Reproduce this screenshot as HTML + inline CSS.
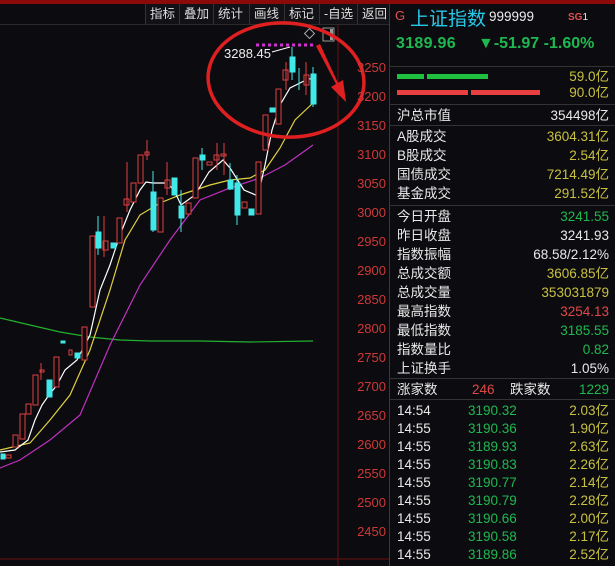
<!DOCTYPE html>
<html><head><meta charset="utf-8"><style>
*{margin:0;padding:0;box-sizing:border-box}
body{width:615px;height:566px;background:#0c0c10;overflow:hidden;position:relative;font-family:"Liberation Sans","Noto Sans CJK SC",sans-serif;color:#ddd}
.top{position:absolute;left:0;top:0;width:615px;height:4px;background:#8a0a0a}
.tb{position:absolute;left:0;top:4px;width:389px;height:20px;font-size:12.5px;color:#ddd;line-height:20px;white-space:nowrap}
.tb span{position:absolute;top:0;height:20px;border-left:1px solid #333;padding-left:4px;white-space:nowrap;background:#111116}
.ax{position:absolute;left:340px;width:46px;text-align:right;font-size:13px;color:#d03838}
.rp{position:absolute;left:389px;top:4px;width:226px;height:562px;border-left:1px solid #3a3a3a;background:#0c0c10}
.r{position:absolute;left:7px;right:6px;font-size:13.5px;height:19px;line-height:19px;white-space:nowrap}
.r b{font-weight:normal;position:absolute;right:0}
.sep{position:absolute;left:0;right:0;height:1px;background:#333}
.g{color:#1fb850}.y{color:#c8c040}.rd{color:#e04848}.w{color:#e8e8e8}
</style></head><body>
<div class="top"></div>
<div class="tb">
<span style="left:145px;width:34px">指标</span><span style="left:179px;width:34px">叠加</span><span style="left:213px;width:36px">统计</span><span style="left:249px;width:35px">画线</span><span style="left:284px;width:35px">标记</span><span style="left:319px;width:38px">-自选</span><span style="left:357px;width:32px">返回</span>
</div>
<div style="position:absolute;left:0;top:24px;width:389px;height:1px;background:#2a2a2a"></div>
<svg width="389" height="566" style="position:absolute;left:0;top:0">
<line x1="338" y1="25" x2="338" y2="566" stroke="#6a1010"/>
<line x1="0" y1="559" x2="389" y2="559" stroke="#6a1010"/>
<g fill="none" stroke-width="1.2">
<polyline stroke="#22b030" points="0,318 30,325 60,332 90,337 120,340 150,341 200,341 250,342 313,341"/>
<polyline stroke="#c030c0" points="0,468 20,460 50,440 80,415 110,345 140,285 170,240 200,200 230,188 260,178 285,165 313,145"/>
<polyline stroke="#e0d040" points="0,450 30,443 50,420 70,395 90,350 110,290 125,240 140,215 160,203 180,195 210,185 230,180 250,178 265,170 280,148 295,120 313,103"/>
<polyline stroke="#fff" points="0,452 15,450 28,440 35,420 42,405 49,395 57,385 65,370 77,360 90,335 100,290 110,265 120,235 130,210 140,190 146,182 153,183 167,183 174,190 181,205 195,195 209,172 223,160 230,168 244,190 258,196 265,165 272,130 280,105 290,88 306,80 313,78"/>
</g>
<g stroke="#e04040" fill="#0c0c10" stroke-width="1">
<rect x="6" y="455" width="5" height="3"/><rect x="13" y="435" width="5" height="12"/><rect x="20" y="414" width="5" height="25"/><rect x="26" y="404" width="5" height="10"/><rect x="33" y="375" width="5" height="30"/><rect x="40" y="370" width="4" height="2"/><rect x="54" y="357" width="5" height="30"/><rect x="69" y="350" width="3" height="5"/><rect x="82" y="327" width="5" height="33"/>
<rect x="90" y="236" width="5" height="71"/><rect x="103" y="241" width="5" height="9"/><rect x="117" y="218" width="5" height="25"/><rect x="124" y="199" width="5" height="6"/><rect x="131" y="183" width="5" height="19"/><rect x="138" y="155" width="5" height="28"/><rect x="145" y="152" width="4" height="3"/><rect x="158" y="198" width="5" height="34"/><rect x="165" y="180" width="5" height="8"/><rect x="186" y="203" width="5" height="11"/><rect x="193" y="158" width="5" height="40"/><rect x="207" y="162" width="5" height="3"/><rect x="214" y="155" width="5" height="5"/><rect x="221" y="154" width="5" height="2"/><rect x="242" y="202" width="5" height="6"/><rect x="256" y="162" width="5" height="52"/><rect x="263" y="115" width="5" height="35"/><rect x="276" y="89" width="5" height="35"/><rect x="283" y="70" width="5" height="10"/><rect x="304" y="75" width="5" height="10"/>
</g>
<g stroke="#e04040" stroke-width="1">
<line x1="41" y1="363" x2="41" y2="380"/><line x1="127" y1="162" x2="127" y2="212"/><line x1="147" y1="140" x2="147" y2="160"/><line x1="167" y1="162" x2="167" y2="195"/><line x1="217" y1="143" x2="217" y2="170"/><line x1="224" y1="143" x2="224" y2="175"/><line x1="306" y1="62" x2="306" y2="95"/><line x1="286" y1="62" x2="286" y2="90"/><line x1="104" y1="216" x2="104" y2="257"/>
</g>
<g fill="#40e8e8" stroke="#40e8e8">
<rect x="1" y="454" width="4" height="5"/><rect x="47" y="380" width="5" height="17"/><rect x="61" y="341" width="4" height="2"/><rect x="75" y="353" width="5" height="5"/><rect x="96" y="232" width="5" height="16"/><rect x="111" y="243" width="5" height="5"/><rect x="151" y="192" width="5" height="38"/><rect x="172" y="178" width="5" height="17"/><rect x="179" y="206" width="5" height="12"/><rect x="200" y="155" width="5" height="5"/><rect x="228" y="180" width="5" height="9"/><rect x="235" y="183" width="5" height="32"/><rect x="249" y="209" width="5" height="6"/><rect x="270" y="108" width="5" height="4"/><rect x="290" y="57" width="5" height="15"/><rect x="311" y="74" width="5" height="30"/>
<line x1="98" y1="216" x2="98" y2="255"/><line x1="153" y1="171" x2="153" y2="232"/><line x1="181" y1="190" x2="181" y2="232"/><line x1="202" y1="148" x2="202" y2="170"/><line x1="230" y1="163" x2="230" y2="190"/><line x1="292" y1="47" x2="292" y2="80"/><line x1="299" y1="68" x2="299" y2="90"/><line x1="313" y1="67" x2="313" y2="107"/><line x1="237" y1="175" x2="237" y2="225"/>
</g>
<line x1="256" y1="45" x2="313" y2="45" stroke="#d030d0" stroke-width="3" stroke-dasharray="3,3"/>
<path d="M272,52 L290,47" stroke="#fff" fill="none"/>
<text x="224" y="58" fill="#eee" font-size="13" font-family="Liberation Sans">3288.45</text>
<rect x="306" y="30" width="7" height="7" fill="none" stroke="#aaa" transform="rotate(45 309.5 33.5)"/>
<rect x="323" y="28" width="11" height="13" fill="none" stroke="#999"/><rect x="330" y="29" width="3" height="11" fill="#999"/>
<ellipse cx="286" cy="80" rx="78" ry="57" fill="none" stroke="#e02020" stroke-width="3.5" transform="rotate(4 286 80)"/>
<path d="M316,46 L336,84 L331,87 L346,102 L343,80 L338,83 L320,44 Z" fill="#e02020"/>
</svg>
<div class="ax" style="top:60px">3250</div><div class="ax" style="top:89px">3200</div><div class="ax" style="top:118px">3150</div><div class="ax" style="top:147px">3100</div><div class="ax" style="top:176px">3050</div><div class="ax" style="top:205px">3000</div><div class="ax" style="top:234px">2950</div><div class="ax" style="top:263px">2900</div><div class="ax" style="top:292px">2850</div><div class="ax" style="top:321px">2800</div><div class="ax" style="top:350px">2750</div><div class="ax" style="top:379px">2700</div><div class="ax" style="top:408px">2650</div><div class="ax" style="top:437px">2600</div><div class="ax" style="top:466px">2550</div><div class="ax" style="top:495px">2500</div><div class="ax" style="top:524px">2450</div>
<div class="rp">
<div style="position:absolute;left:5px;top:4px;font-size:13px;color:#e05050">G</div>
<div style="position:absolute;left:20px;top:0px;font-size:19px;color:#28c8e8;white-space:nowrap">上证指数</div>
<div style="position:absolute;left:99px;top:5px;font-size:13.5px;color:#eee">999999</div>
<div style="position:absolute;left:178px;top:8px;font-size:10px;color:#eee;white-space:nowrap"><span style="color:#e05050;font-weight:bold">SG</span>1</div>
<div style="position:absolute;left:6px;top:31px;font-size:16px;font-weight:bold;color:#1fb850;letter-spacing:0.3px">3189.96</div>
<div style="position:absolute;left:88px;top:31px;font-size:16px;font-weight:bold;color:#1fb850;white-space:nowrap">▼-51.97 -1.60%</div>
<div class="sep" style="top:62px"></div>
<div style="position:absolute;left:7px;top:70px;width:27px;height:5px;background:#1fc040"></div>
<div style="position:absolute;left:37px;top:70px;width:61px;height:5px;background:#1fc040"></div>
<div style="position:absolute;left:7px;top:86px;width:71px;height:5px;background:#e84040"></div>
<div style="position:absolute;left:81px;top:86px;width:69px;height:5px;background:#e84040"></div>
<div class="r y" style="top:63px"><b>59.0亿</b></div>
<div class="r y" style="top:79px"><b>90.0亿</b></div>
<div class="sep" style="top:100px"></div>
<div class="r w" style="top:102px">沪总市值<b>354498亿</b></div>
<div class="sep" style="top:121px"></div>
<div class="r w" style="top:123px">A股成交<b class="y">3604.31亿</b></div>
<div class="r w" style="top:142px">B股成交<b class="y">2.54亿</b></div>
<div class="r w" style="top:161px">国债成交<b class="y">7214.49亿</b></div>
<div class="r w" style="top:180px">基金成交<b class="y">291.52亿</b></div>
<div class="sep" style="top:201px"></div>
<div class="r w" style="top:203px">今日开盘<b class="g">3241.55</b></div>
<div class="r w" style="top:222px">昨日收盘<b>3241.93</b></div>
<div class="r w" style="top:241px">指数振幅<b>68.58/2.12%</b></div>
<div class="r w" style="top:260px">总成交额<b class="y">3606.85亿</b></div>
<div class="r w" style="top:279px">总成交量<b class="y">353031879</b></div>
<div class="r w" style="top:298px">最高指数<b class="rd">3254.13</b></div>
<div class="r w" style="top:317px">最低指数<b class="g">3185.55</b></div>
<div class="r w" style="top:336px">指数量比<b class="g">0.82</b></div>
<div class="r w" style="top:355px">上证换手<b>1.05%</b></div>
<div class="sep" style="top:374px"></div>
<div class="r w" style="top:376px">涨家数<span class="rd" style="position:absolute;left:75px">246</span><span style="position:absolute;left:113px">跌家数</span><b class="g">1229</b></div>
<div class="sep" style="top:395px"></div>
<div class="r w" style="top:397px">14:54<span class="g" style="position:absolute;left:71px">3190.32</span><b class="y">2.03亿</b></div>
<div class="r w" style="top:415px">14:55<span class="g" style="position:absolute;left:71px">3190.36</span><b class="y">1.90亿</b></div>
<div class="r w" style="top:433px">14:55<span class="g" style="position:absolute;left:71px">3189.93</span><b class="y">2.63亿</b></div>
<div class="r w" style="top:451px">14:55<span class="g" style="position:absolute;left:71px">3190.83</span><b class="y">2.26亿</b></div>
<div class="r w" style="top:469px">14:55<span class="g" style="position:absolute;left:71px">3190.77</span><b class="y">2.14亿</b></div>
<div class="r w" style="top:487px">14:55<span class="g" style="position:absolute;left:71px">3190.79</span><b class="y">2.28亿</b></div>
<div class="r w" style="top:505px">14:55<span class="g" style="position:absolute;left:71px">3190.66</span><b class="y">2.00亿</b></div>
<div class="r w" style="top:523px">14:55<span class="g" style="position:absolute;left:71px">3190.58</span><b class="y">2.17亿</b></div>
<div class="r w" style="top:541px">14:55<span class="g" style="position:absolute;left:71px">3189.86</span><b class="y">2.52亿</b></div>
</div>
</body></html>
